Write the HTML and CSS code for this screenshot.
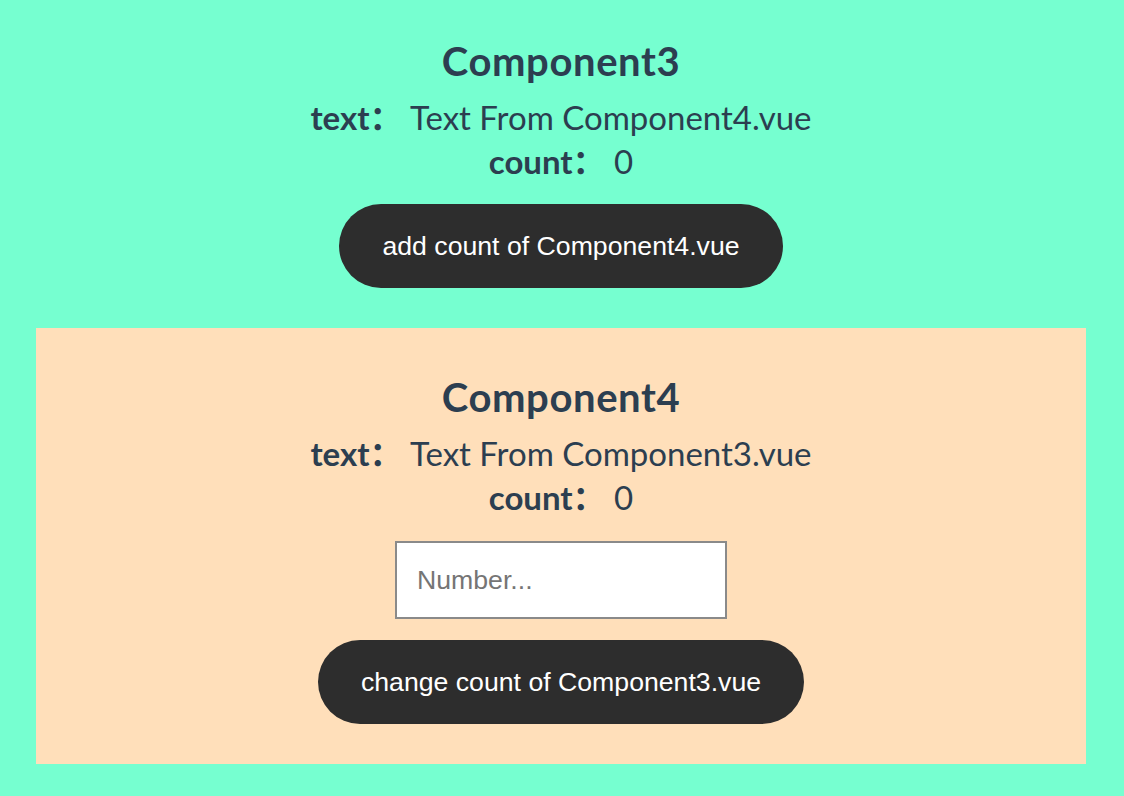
FILE: index.html
```html
<!DOCTYPE html>
<html lang="en">
<head>
<meta charset="utf-8">
<title>Components</title>
<link rel="stylesheet" href="styles.css">
</head>
<body>
<div class="app">
  <section class="comp comp3">
    <h3 class="title">Component3</h3>
    <div class="row"><span class="label">text：</span> <span class="value">Text From Component4.vue</span></div>
    <div class="row"><span class="label">count：</span> <span class="value">0</span></div>
    <button class="btn btn-add" type="button">add count of Component4.vue</button>
  </section>
  <section class="comp comp4">
    <h3 class="title">Component4</h3>
    <div class="row"><span class="label">text：</span> <span class="value">Text From Component3.vue</span></div>
    <div class="row"><span class="label">count：</span> <span class="value">0</span></div>
    <input class="num" type="text" placeholder="Number...">
    <button class="btn btn-change" type="button">change count of Component3.vue</button>
  </section>
</div>
</body>
</html>
```
FILE: styles.css
```css
html, body {
  margin: 0;
  padding: 0;
}
body {
  background: #76ffd0;
  font-family: Lato, "Noto Sans CJK SC", sans-serif;
  color: #2c3e50;
}
.app {
  padding: 0 38px 32px 36px;
  display: flex;
  flex-direction: column;
}
.comp {
  display: flex;
  flex-direction: column;
  align-items: center;
  text-align: center;
}
.comp3 {
  padding-top: 39px;
  padding-bottom: 40px;
}
.comp4 {
  background: #ffdfba;
  padding-top: 47px;
  padding-bottom: 40px;
}
.title {
  margin: 0 0 12px;
  font-size: 40px;
  line-height: 44px;
  height: 44px;
  font-weight: 700;
  letter-spacing: 0.6px;
}
.row {
  font-size: 33px;
  line-height: 44px;
  height: 44px;
  margin-bottom: 0;
  white-space: pre;
}
.label {
  font-weight: 700;
}
.value {
  font-weight: 400;
}
.btn {
  margin-top: 21px;
  height: 84px;
  padding: 0 43px;
  border: none;
  border-radius: 42px;
  background: #2d2d2d;
  color: #ffffff;
  font-family: "Liberation Sans", Arial, sans-serif;
  font-size: 26.67px;
}
.num {
  margin-top: 22px;
  box-sizing: border-box;
  width: 332px;
  height: 78px;
  border: 2px solid #8a8a8a;
  background: #ffffff;
  padding: 0 20px;
  font-family: "Liberation Sans", Arial, sans-serif;
  font-size: 26.67px;
  color: #333;
  outline: none;
}
.num::placeholder {
  color: #757575;
}
```
